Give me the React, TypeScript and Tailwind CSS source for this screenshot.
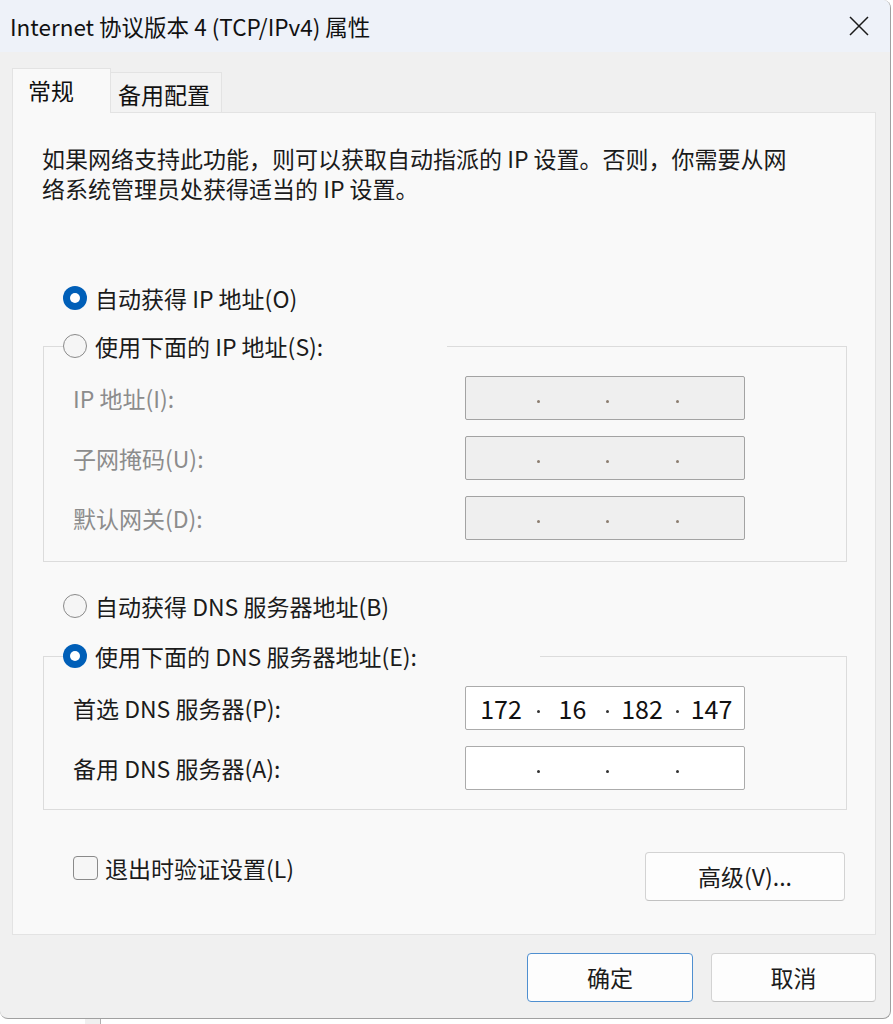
import React from "react";

const FONT = { fontFamily: '"Noto Sans CJK SC", "Noto Sans", sans-serif' };

function Radio({ checked }: { checked?: boolean }) {
  if (checked) {
    return (
      <span className="flex h-[24px] w-[24px] shrink-0 items-center justify-center rounded-full bg-[#005fb8]">
        <span className="h-[10px] w-[10px] rounded-full bg-white" />
      </span>
    );
  }
  return <span className="h-[24px] w-[24px] shrink-0 rounded-full border-[1.5px] border-[#8a8a8a] bg-[#f5f5f5]" />;
}

function RadioRow({ checked, label, width }: { checked?: boolean; label: string; width?: string }) {
  return (
    <div className={`flex h-[26px] items-center gap-[8px] bg-[#f9f9f9] ${width ?? ""}`}>
      <Radio checked={checked} />
      <span className="whitespace-nowrap text-[23px] leading-[26px] text-[#1b1b1b]">{label}</span>
    </div>
  );
}

function IpBox({ values, disabled }: { values?: string[]; disabled?: boolean }) {
  const v = values ?? ["", "", "", ""];
  const widths = ["w-[70px]", "w-[65px]", "w-[66px]", "w-[65px]"];
  return (
    <div
      className={`flex h-[44px] w-[280px] items-center rounded-[2px] border ${
        disabled ? "border-[#a3a3a3] bg-[#efefef]" : "border-[#ababab] bg-white"
      }`}
    >
      {v.map((x, i) => (
        <React.Fragment key={i}>
          {i > 0 && (
            <span className="flex h-full w-[4px] items-center justify-center pt-[7px]">
              <span className={`h-[3px] w-[3px] rounded-full ${disabled ? "bg-[#8b7d70]" : "bg-[#333]"}`} />
            </span>
          )}
          <span className={`${widths[i]} text-center text-[25px] leading-[44px] text-[#111]`}>{x}</span>
        </React.Fragment>
      ))}
    </div>
  );
}

function FieldRow({ label, disabled, values }: { label: string; disabled?: boolean; values?: string[] }) {
  return (
    <div className="flex items-center">
      <span
        className={`w-[392px] whitespace-nowrap text-[23px] leading-[30px] ${
          disabled ? "text-[#8c8c8c]" : "text-[#1b1b1b]"
        }`}
      >
        {label}
      </span>
      <IpBox disabled={disabled} values={values} />
    </div>
  );
}

function Button({ label, primary, className }: { label: string; primary?: boolean; className?: string }) {
  return (
    <div
      className={`flex h-[49px] items-center justify-center rounded-[4px] border bg-[#fdfdfd] text-[23px] text-[#1b1b1b] ${
        primary ? "border-[#4f8fd0]" : "border-[#d3d3d3] border-b-[#c2c2c2]"
      } ${className ?? ""}`}
    >
      {label}
    </div>
  );
}

export default function App() {
  return (
    <div className="h-[1024px] w-[893px] overflow-hidden bg-white" style={FONT}>
      <div className="flex h-[1019px] w-[891px] flex-col overflow-hidden rounded-tr-[8px] rounded-b-[8px] border-r border-b border-[#a0a0a0] bg-[#f0f0f0]">
        {/* title bar */}
        <div className="flex h-[52px] shrink-0 items-center justify-between bg-[#eef2f9] pl-[10px] pr-[21px]">
          <span className="whitespace-nowrap text-[22.5px] leading-[30px] text-[#111]">Internet 协议版本 4 (TCP/IPv4) 属性</span>
          <svg width="20" height="20" viewBox="0 0 20 20" fill="none" stroke="#1a1a1a" strokeWidth="1.5">
            <path d="M1 1 L19 19 M19 1 L1 19" />
          </svg>
        </div>

        {/* tabs */}
        <div className="relative z-10 mt-[16px] flex items-end pl-[12px]">
          <div className="-mb-px flex h-[45px] w-[99px] items-start border border-b-0 border-[#e3e3e3] bg-[#f9f9f9] pl-[15px] pt-[6px] text-[23px] leading-[30px] text-[#111]">
            常规
          </div>
          <div className="flex h-[40px] w-[111px] items-start border border-b-0 border-l-0 border-[#e3e3e3] bg-[#f3f3f3] pl-[7px] pt-[6px] text-[23px] leading-[30px] text-[#111]">
            备用配置
          </div>
        </div>

        {/* panel */}
        <div className="ml-[12px] flex h-[823px] w-[864px] shrink-0 flex-col border border-[#e3e3e3] bg-[#f9f9f9]">
          <p className="pl-[29px] pt-[30px] text-[23px] leading-[30px] whitespace-nowrap text-[#1b1b1b]">
            如果网络支持此功能，则可以获取自动指派的 IP 设置。否则，你需要从网
            <br />
            络系统管理员处获得适当的 IP 设置。
          </p>

          <div className="ml-[50px] mt-[82px]">
            <RadioRow checked label="自动获得 IP 地址(O)" />
          </div>

          {/* group 1 */}
          <div className="ml-[30px] mt-[35px] w-[804px] border border-[#dcdcdc] pb-[21px]">
            <div className="-mt-[14px] ml-[19px]">
              <RadioRow label="使用下面的 IP 地址(S):" width="w-[384px]" />
            </div>
            <div className="mt-[17px] flex flex-col gap-[16px] pl-[29px]">
              <FieldRow label="IP 地址(I):" disabled />
              <FieldRow label="子网掩码(U):" disabled />
              <FieldRow label="默认网关(D):" disabled />
            </div>
          </div>

          <div className="ml-[50px] mt-[31px]">
            <RadioRow label="自动获得 DNS 服务器地址(B)" />
          </div>

          {/* group 2 */}
          <div className="ml-[30px] mt-[37px] w-[804px] border border-[#dcdcdc] pb-[19px]">
            <div className="-mt-[14px] ml-[19px]">
              <RadioRow checked label="使用下面的 DNS 服务器地址(E):" width="w-[477px]" />
            </div>
            <div className="mt-[17px] flex flex-col gap-[16px] pl-[29px]">
              <FieldRow label="首选 DNS 服务器(P):" values={["172", "16", "182", "147"]} />
              <FieldRow label="备用 DNS 服务器(A):" />
            </div>
          </div>

          <div className="mt-[42px] flex items-start justify-between pl-[60px] pr-[30px]">
            <div className="mt-[3px] flex items-center gap-[7px]">
              <span className="h-[24px] w-[25px] rounded-[4px] border border-[#8a8a8a] bg-[#f6f6f6]" />
              <span className="whitespace-nowrap text-[23px] leading-[26px] text-[#1b1b1b]">退出时验证设置(L)</span>
            </div>
            <Button label="高级(V)..." className="w-[200px]" />
          </div>
        </div>

        {/* footer buttons */}
        <div className="mt-[18px] flex justify-end gap-[18px] pr-[14px]">
          <Button label="确定" primary className="w-[166px]" />
          <Button label="取消" className="w-[165px]" />
        </div>
      </div>
      <div className="ml-[85px] h-[5px] w-[16px] border-r border-[#b0b0b0] bg-[#f0f0f0]" />
    </div>
  );
}
